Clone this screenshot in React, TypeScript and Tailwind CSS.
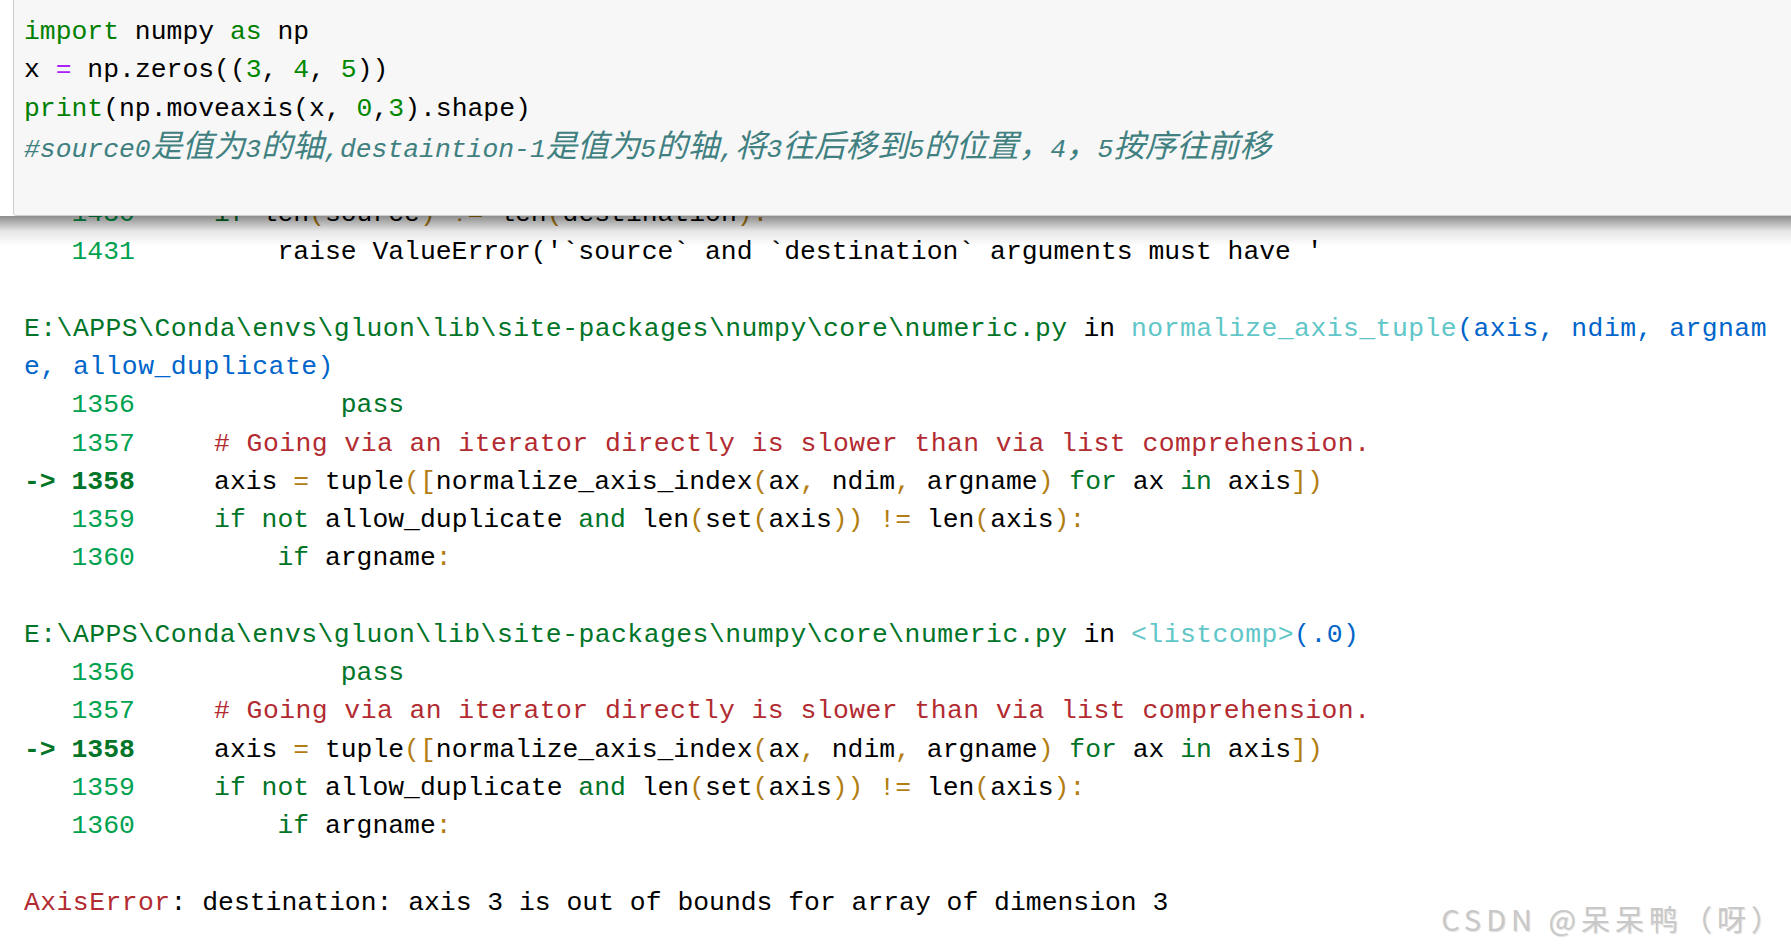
import React from 'react';

type Seg = [string, string?];

// normal-width ansi colours
const K = 'text-[#007427]';
const KB = 'text-[#007427] font-bold';
const N = 'text-[#00a250]';
const A = 'text-[#b27d12]';
// these come out a little wider in the traceback (bold ansi)
const KW = 'text-[#007427] tracking-[0.47px]';
const RW = 'text-[#b22b31] tracking-[0.45px]';
const CW = 'text-[#60c6c8] tracking-[0.47px]';
const BW = 'text-[#0065ca] tracking-[0.47px]';

// jupyter cell colours
const CK = 'text-[#008000]';
const CN = 'text-[#008800]';
const CO = 'text-[#aa22ff]';

const cjk = /([\u3000-\u9fff\uff00-\uffef]+)/;

function Mixed({ text }: { text: string }) {
  return (
    <>
      {text.split(cjk).map((part, i) =>
        cjk.test(part) ? (
          <span key={i} className="font-['Noto_Sans_CJK_SC',sans-serif] text-[31.5px] leading-none">
            {part}
          </span>
        ) : (
          <React.Fragment key={i}>{part}</React.Fragment>
        )
      )}
    </>
  );
}

function Line({ segs }: { segs: Seg[] }) {
  return (
    <div className="h-[38.25px] whitespace-pre">
      {segs.map(([t, cls], i) => (
        <span key={i} className={cls}>
          {t}
        </span>
      ))}
    </div>
  );
}

const frame = (head: Seg[]): Seg[][] => [
  head,
  [[ '   1356', N ], [ '             ' ], [ 'pass', K ]],
  [[ '   1357', N ], [ '     ' ], [ '# Going via an iterator directly is slower than via list comprehension.', RW ]],
  [
    [ '-> 1358', KB ], [ '     axis ' ], [ '=', A ], [ ' tuple' ], [ '([', A ], [ 'normalize_axis_index' ],
    [ '(', A ], [ 'ax' ], [ ',', A ], [ ' ndim' ], [ ',', A ], [ ' argname' ], [ ')', A ], [ ' ' ],
    [ 'for', K ], [ ' ax ' ], [ 'in', K ], [ ' axis' ], [ '])', A ],
  ],
  [
    [ '   1359', N ], [ '     ' ], [ 'if', K ], [ ' ' ], [ 'not', K ], [ ' allow_duplicate ' ], [ 'and', K ],
    [ ' len' ], [ '(', A ], [ 'set' ], [ '(', A ], [ 'axis' ], [ '))', A ], [ ' ' ], [ '!=', A ], [ ' len' ],
    [ '(', A ], [ 'axis' ], [ '):', A ],
  ],
  [[ '   1360', N ], [ '         ' ], [ 'if', K ], [ ' argname' ], [ ':', A ]],
];

const path = 'E:\\APPS\\Conda\\envs\\gluon\\lib\\site-packages\\numpy\\core\\numeric.py';

const output: Seg[][] = [
  [
    [ '   1430', N ], [ '     ' ], [ 'if', K ], [ ' len' ], [ '(', A ], [ 'source' ], [ ')', A ], [ ' ' ],
    [ '!=', A ], [ ' len' ], [ '(', A ], [ 'destination' ], [ ')', A ], [ ':', A ],
  ],
  [[ '   1431', N ], [ "         raise ValueError('`source` and `destination` arguments must have '" ]],
  [[ '' ]],
  [[ path, KW ], [ ' in ' ], [ 'normalize_axis_tuple', CW ], [ '(axis, ndim, argnam', BW ]],
  ...frame([[ 'e, allow_duplicate)', BW ]]),
  [[ '' ]],
  ...frame([[ path, KW ], [ ' in ' ], [ '<listcomp>', CW ], [ '(.0)', BW ]]),
  [[ '' ]],
  [[ 'AxisError', RW ], [ ': destination: axis 3 is out of bounds for array of dimension 3' ]],
];

const comment = '#source0是值为3的轴,destaintion-1是值为5的轴,将3往后移到5的位置，4，5按序往前移';

export default function App() {
  return (
    <div className="relative h-[951px] w-full overflow-hidden bg-white font-['Liberation_Mono','Noto_Sans_CJK_SC',monospace] text-[26.4px] leading-[38.25px] text-black">
      {/* traceback output, scrolled under the cell */}
      <div className="pl-[24px] pt-[195px]">
        {output.map((segs, i) => (
          <Line key={i} segs={segs} />
        ))}
      </div>

      {/* code cell */}
      <div className="absolute left-[13px] right-[-2px] top-[-1px] z-10 h-[217px] rounded-bl-[3px] border border-[#cfcfcf] bg-[#f7f7f7] pl-[10px] pt-[13px] leading-[38.4px]">
        <div className="h-[38.4px] whitespace-pre">
          <span className={CK}>import</span> numpy <span className={CK}>as</span> np
        </div>
        <div className="h-[38.4px] whitespace-pre">
          x <span className={CO}>=</span> np.zeros((<span className={CN}>3</span>, <span className={CN}>4</span>,{' '}
          <span className={CN}>5</span>))
        </div>
        <div className="h-[38.4px] whitespace-pre">
          <span className={CK}>print</span>(np.moveaxis(x, <span className={CN}>0</span>,<span className={CN}>3</span>).shape)
        </div>
        <div className="h-[38.4px] whitespace-pre italic text-[#408080]">
          <Mixed text={comment} />
        </div>
      </div>
      <div className="absolute left-0 right-0 top-[216px] z-10 h-[30px] bg-linear-to-b from-black/45 via-black/10 to-transparent" />

      <div className="absolute right-[6px] top-[900px] font-['Noto_Sans_CJK_SC',sans-serif] text-[29px] leading-[36px] tracking-[5px] text-[#c8c8c8] [text-shadow:1px_1px_1px_rgba(0,0,0,0.12)]">
        CSDN @呆呆鸭（呀）
      </div>
    </div>
  );
}
